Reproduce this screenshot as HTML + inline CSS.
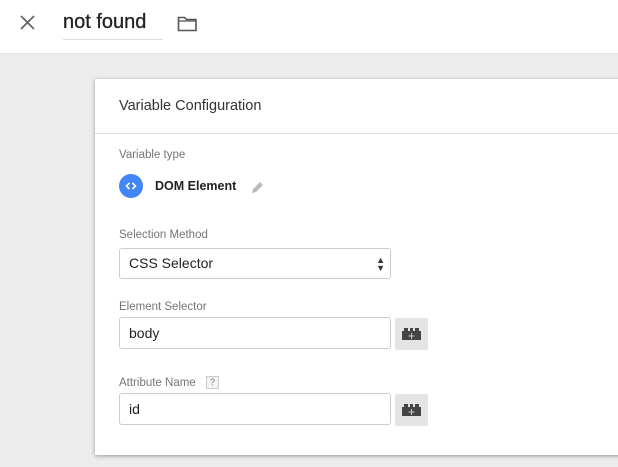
<!DOCTYPE html>
<html><head><style>
*{margin:0;padding:0;box-sizing:border-box}
body{width:618px;height:467px;overflow:hidden;background:#ececec;font-family:"Liberation Sans",sans-serif;position:relative}
.top{position:absolute;left:0;top:0;width:618px;height:54px;background:#fff;border-bottom:1px solid #e0e0e0}
.abs{position:absolute}
.card{position:absolute;left:95px;top:79px;width:540px;height:376px;background:#fff;box-shadow:0 1px 4px rgba(0,0,0,.35)}
.lbl{position:absolute;font-size:11.5px;color:#757575}
.inp{position:absolute;left:119px;width:272px;border:1px solid #ccc;border-radius:3px;background:#fff;font-size:14px;color:#222;padding-left:9px}
.btn{position:absolute;left:395px;width:33px;height:32px;background:#e4e4e4;border-radius:2px}
</style></head><body>
<div class="top">
<svg class="abs" style="left:19px;top:14px" width="17" height="17" viewBox="0 0 17 17"><path d="M2 2L15 15M15 2L2 15" stroke="#666" stroke-width="1.8"/></svg>
<div class="abs" style="left:63px;top:11px;font-size:20px;color:#222;-webkit-text-stroke:0.3px #222">not found</div>
<div class="abs" style="left:63px;top:39px;width:100px;height:1px;background:#ddd"></div>
<svg class="abs" style="left:177px;top:15px" width="21" height="17" viewBox="0 0 21 17"><path d="M1.5 2.5h6l2 2h9.5v11h-17.5z" fill="none" stroke="#555" stroke-width="1.6"/><path d="M1.5 6h17.5" stroke="#555" stroke-width="1.2"/></svg>
</div>
<div class="card">
<div class="abs" style="left:24px;top:19px;font-size:14.5px;color:#333">Variable Configuration</div>
<div class="abs" style="left:0;top:54px;width:540px;height:1px;background:#e0e0e0"></div>
</div>
<div class="lbl" style="left:119px;top:149px">Variable type</div>
<div class="abs" style="left:119px;top:174px;width:24px;height:24px;border-radius:50%;background:#4285f4"></div>
<svg class="abs" style="left:119px;top:174px" width="24" height="24" viewBox="0 0 24 24"><path d="M10.5 9L7.5 12L10.5 15M13.5 9L16.5 12L13.5 15" fill="none" stroke="#fff" stroke-width="1.6"/></svg>
<div class="abs" style="left:155px;top:179px;font-size:12.5px;font-weight:bold;color:#222">DOM Element</div>
<svg class="abs" style="left:251px;top:180px" width="14" height="14" viewBox="0 0 14 14"><path d="M1 13l1-4 7-7 3 3-7 7z" fill="#bbb"/></svg>
<div class="lbl" style="left:119px;top:229px">Selection Method</div>
<div class="inp" style="top:248px;height:31px;line-height:29px">CSS Selector<span class="abs" style="right:5px;font-size:9px;line-height:8px;top:7px;color:#333">▲<br>▼</span></div>
<div class="lbl" style="left:119px;top:301px">Element Selector</div>
<div class="inp" style="top:317px;height:32px;line-height:30px">body</div>
<div class="btn" style="top:318px"><svg class="abs" style="left:7px;top:10px" width="19" height="12" viewBox="0 0 19 12"><path d="M0 3h2V0h4v3h2V0h3v3h2V0h4v3h2v9H0z" fill="#444"/><path d="M9.5 5v6M6.5 8h6" stroke="#ccc" stroke-width="1"/></svg></div>
<div class="lbl" style="left:119px;top:377px">Attribute Name</div>
<div class="abs" style="left:206px;top:376px;width:13px;height:13px;border:1px solid #ccc;background:#f3f3f3;font-size:9px;color:#777;text-align:center;line-height:11px">?</div>
<div class="inp" style="top:393px;height:32px;line-height:30px">id</div>
<div class="btn" style="top:394px"><svg class="abs" style="left:7px;top:10px" width="19" height="12" viewBox="0 0 19 12"><path d="M0 3h2V0h4v3h2V0h3v3h2V0h4v3h2v9H0z" fill="#444"/><path d="M9.5 5v6M6.5 8h6" stroke="#ccc" stroke-width="1"/></svg></div>
</body></html>
